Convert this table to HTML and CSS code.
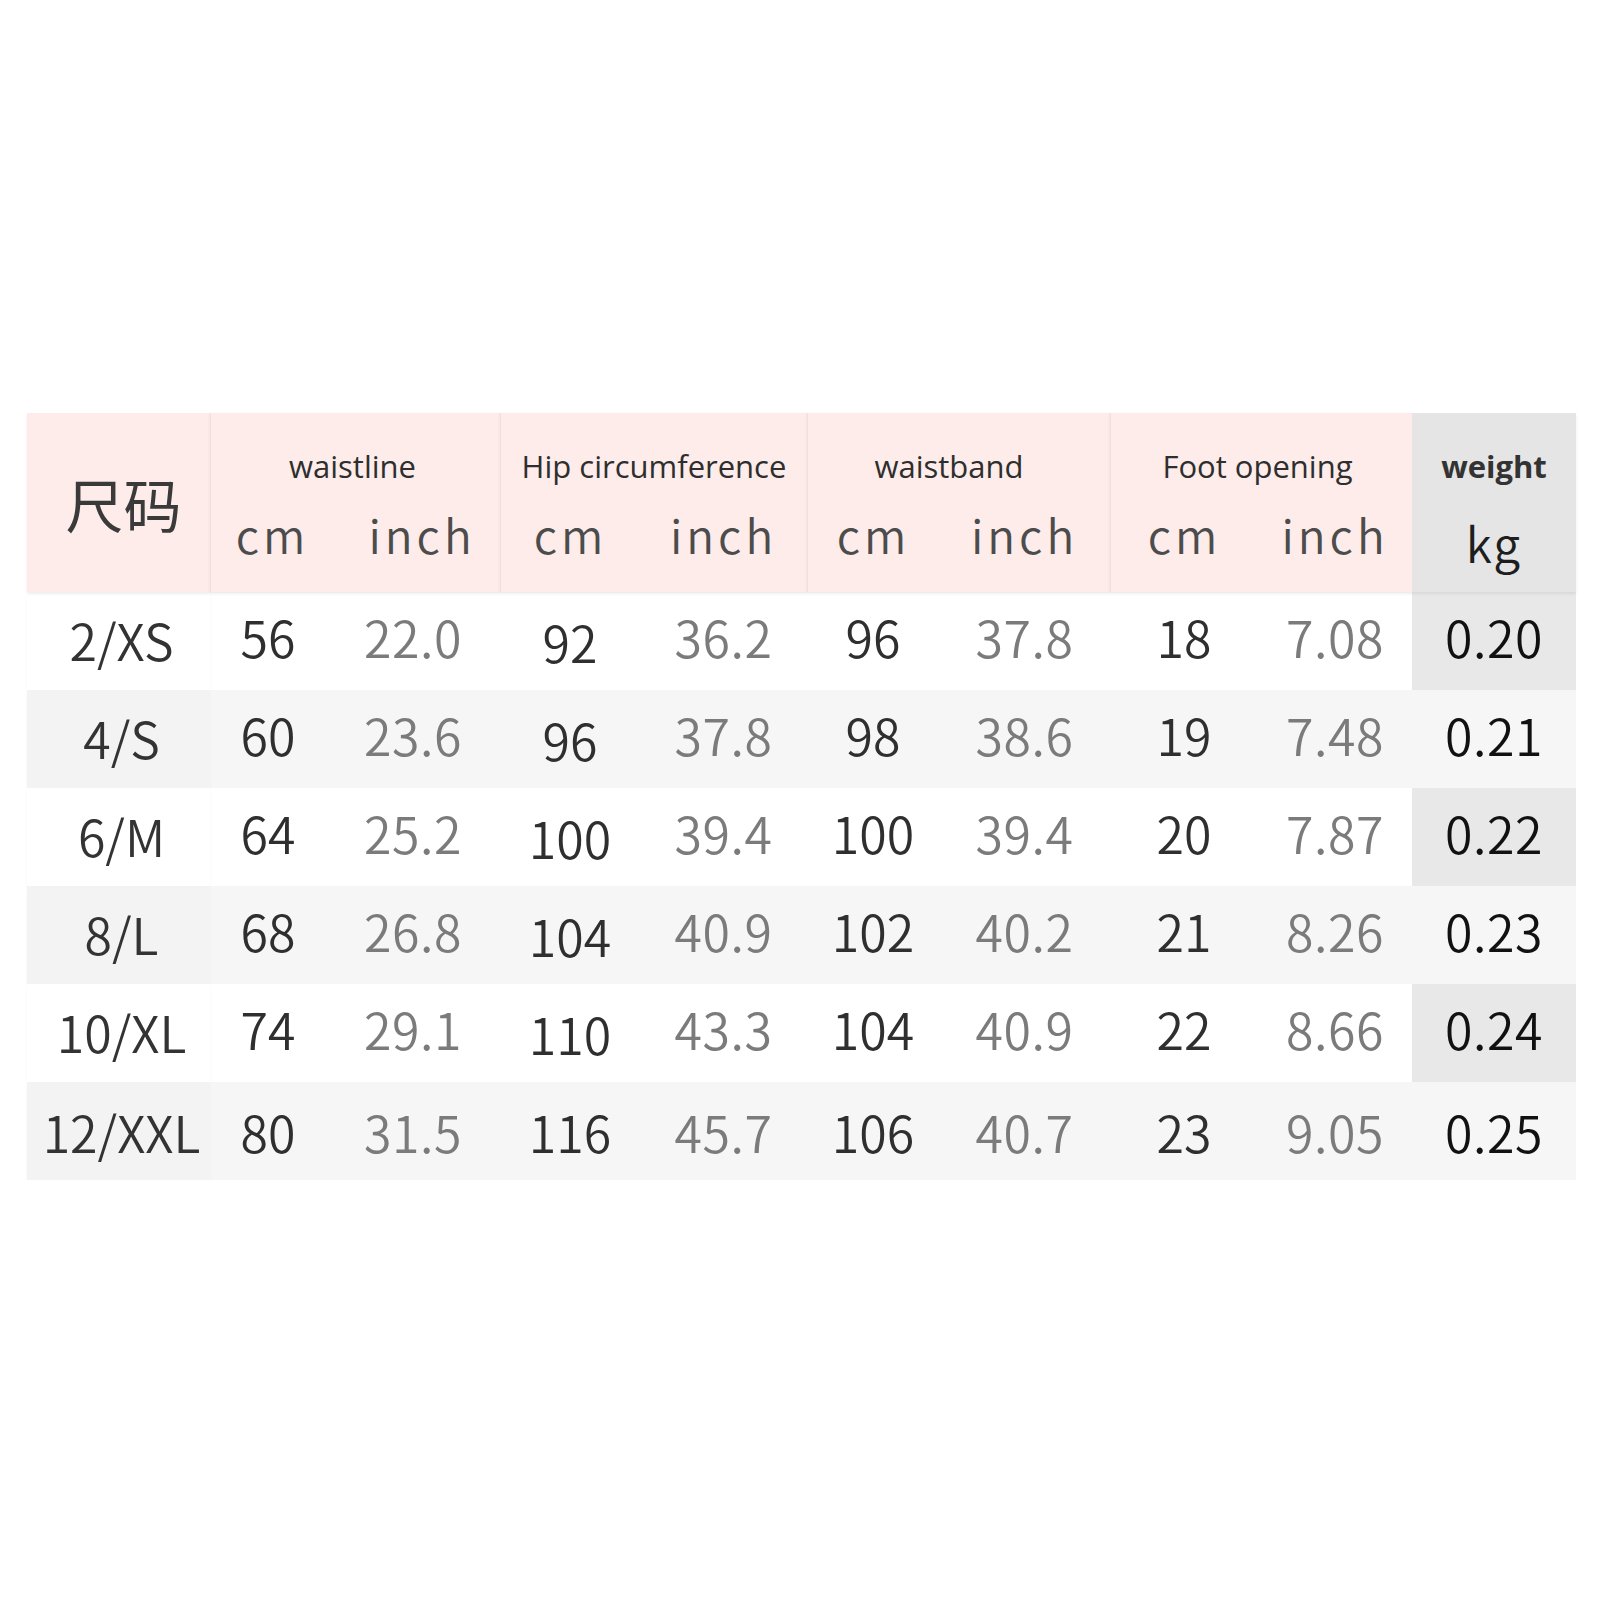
FILE: index.html
```html
<!DOCTYPE html>
<html lang="zh">
<head>
<meta charset="utf-8">
<title>尺码表</title>
<link rel="stylesheet" href="styles.css">
</head>
<body>
<div class="page">
  <div class="sheet">
    <div class="thead">
      <div class="hsize">尺码</div>
      <div class="hgroup first">
        <div class="gtitle">waistline</div>
        <div class="unit">cm</div><div class="unit">inch</div>
      </div>
      <div class="hgroup">
        <div class="gtitle">Hip circumference</div>
        <div class="unit">cm</div><div class="unit">inch</div>
      </div>
      <div class="hgroup band">
        <div class="gtitle">waistband</div>
        <div class="unit">cm</div><div class="unit">inch</div>
      </div>
      <div class="hgroup foot">
        <div class="gtitle">Foot opening</div>
        <div class="unit">cm</div><div class="unit">inch</div>
      </div>
      <div class="hweight">
        <div class="gtitle bold">weight</div>
        <div class="unit kg">kg</div>
      </div>
    </div>

    <div class="row odd">
      <div class="size">2/XS</div>
      <div class="cm">56</div><div class="in">22.0</div>
      <div class="cm low">92</div><div class="in">36.2</div>
      <div class="cm">96</div><div class="in">37.8</div>
      <div class="cm">18</div><div class="in">7.08</div>
      <div class="wt">0.20</div>
    </div>
    <div class="row even">
      <div class="size">4/S</div>
      <div class="cm">60</div><div class="in">23.6</div>
      <div class="cm low">96</div><div class="in">37.8</div>
      <div class="cm">98</div><div class="in">38.6</div>
      <div class="cm">19</div><div class="in">7.48</div>
      <div class="wt">0.21</div>
    </div>
    <div class="row odd">
      <div class="size">6/M</div>
      <div class="cm">64</div><div class="in">25.2</div>
      <div class="cm low">100</div><div class="in">39.4</div>
      <div class="cm">100</div><div class="in">39.4</div>
      <div class="cm">20</div><div class="in">7.87</div>
      <div class="wt">0.22</div>
    </div>
    <div class="row even">
      <div class="size">8/L</div>
      <div class="cm">68</div><div class="in">26.8</div>
      <div class="cm low">104</div><div class="in">40.9</div>
      <div class="cm">102</div><div class="in">40.2</div>
      <div class="cm">21</div><div class="in">8.26</div>
      <div class="wt">0.23</div>
    </div>
    <div class="row odd">
      <div class="size">10/XL</div>
      <div class="cm">74</div><div class="in">29.1</div>
      <div class="cm low">110</div><div class="in">43.3</div>
      <div class="cm">104</div><div class="in">40.9</div>
      <div class="cm">22</div><div class="in">8.66</div>
      <div class="wt">0.24</div>
    </div>
    <div class="row even last">
      <div class="size">12/XXL</div>
      <div class="cm">80</div><div class="in">31.5</div>
      <div class="cm">116</div><div class="in">45.7</div>
      <div class="cm">106</div><div class="in">40.7</div>
      <div class="cm">23</div><div class="in">9.05</div>
      <div class="wt">0.25</div>
    </div>
  </div>
</div>
</body>
</html>
```

FILE: styles.css
```css
html, body {
  margin: 0;
  padding: 0;
  background: #ffffff;
}

.page {
  padding: 413px 24px 0 27px;
  width: 1549px;
}

.sheet {
  --cols: 183px 116px 174px 140px 167px 132px 171px 148px 154px 164px;
  display: flex;
  flex-direction: column;
  width: 1549px;
  font-family: "Noto Sans CJK SC", "Noto Sans", sans-serif;
}

/* ---------- header ---------- */
.thead {
  display: grid;
  grid-template-columns: var(--cols);
  height: 179px;
  background: #fdecea;
  box-shadow: 0 2px 3px rgba(0, 0, 0, 0.07);
  position: relative;
  z-index: 2;
}

.hsize {
  display: flex;
  align-items: center;
  justify-content: center;
  font-size: 58px;
  font-weight: 400;
  color: #3a3a3a;
  padding-left: 10px;
}

.hgroup {
  grid-column: span 2;
  display: grid;
  grid-template-columns: subgrid;
  grid-template-rows: 40px 60px;
  row-gap: 18px;
  padding-top: 33px;
  border-left: 1px solid #f4dedd;
  box-shadow: -1px 0 2px rgba(0, 0, 0, 0.04);
}

.hweight {
  display: grid;
  grid-template-rows: 40px 60px;
  row-gap: 18px;
  padding-top: 33px;
  background: #e5e5e5;
}

.gtitle {
  grid-column: 1 / -1;
  text-align: center;
  font-family: "Open Sans", "Noto Sans", sans-serif;
  font-size: 31px;
  line-height: 40px;
  color: #2e2e2e;
}

.hgroup.first .gtitle { padding-right: 6px; }
.hgroup.band .gtitle { padding-right: 20px; }
.hgroup.foot .gtitle { padding-right: 8px; }

.gtitle.bold {
  font-weight: 700;
  color: #333;
}

.unit {
  text-align: center;
  font-size: 46px;
  font-weight: 350;
  line-height: 60px;
  letter-spacing: 4px;
  color: #4c4c4c;
}

.hgroup.first .unit:nth-child(2) { padding-left: 8px; }
.hgroup.first .unit:nth-child(3) { padding-left: 18px; }

.unit.kg {
  color: #1e1e1e;
  letter-spacing: 2px;
  font-size: 48px;
  padding-top: 8px;
}

/* ---------- rows ---------- */
.row {
  display: grid;
  grid-template-columns: var(--cols);
  height: 98px;
  align-items: center;
  font-size: 50px;
  font-weight: 350;
  line-height: 1;
}

.row.odd { background: #ffffff; }
.row.even { background: #f6f6f6; }

.row > div {
  display: flex;
  align-items: center;
  justify-content: center;
  height: 100%;
  padding-bottom: 10px;
  box-sizing: border-box;
}

.row.last > div { padding-bottom: 0; }

.size {
  color: #333;
  box-shadow: 0 3px 3px -1px rgba(0, 0, 0, 0.09);
  position: relative;
  z-index: 1;
}

.row.even .size { background: #f3f3f3; }
.row.odd .size { background: #ffffff; }

.row > .size { padding-bottom: 4px; padding-left: 6px; }

.cm {
  color: #2f2f2f;
}

.row > .cm.low { padding-bottom: 0; }

.in {
  color: #7b7b7b;
  letter-spacing: 0.5px;
}

.wt {
  color: #111;
  letter-spacing: 0.5px;
}

.row.odd .wt { background: #e8e8e8; }
.row.even .wt { background: #f6f6f6; }
```
